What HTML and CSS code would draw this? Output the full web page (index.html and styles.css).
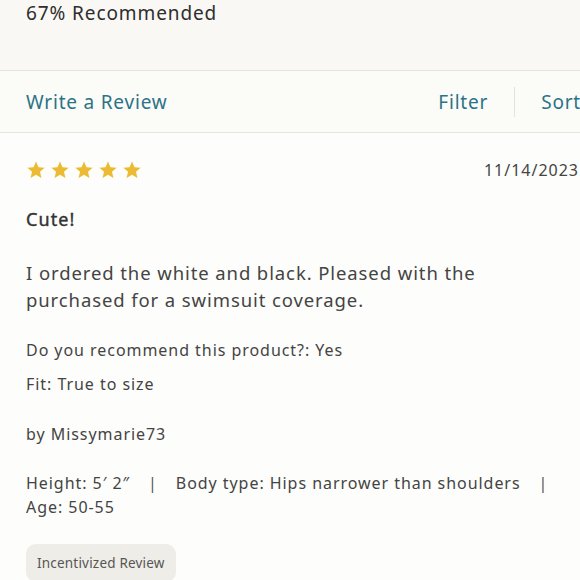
FILE: index.html
```html
<!DOCTYPE html>
<html lang="en">
<head>
<meta charset="utf-8">
<link rel="stylesheet" href="styles.css">
</head>
<body>
<div class="page">
  <section class="summary">
    <div class="summary-text">67% Recommended</div>
  </section>
  <nav class="toolbar">
    <a class="link">Write a Review</a>
    <div class="tools">
      <a class="link filter">Filter</a>
      <span class="divider"></span>
      <a class="link sort">Sort</a>
    </div>
  </nav>
  <article class="review">
    <div class="review-head">
      <div class="stars">
        <svg class="star" viewBox="0 0 24 24"><path d="M12 1.8l3 6.9 7.4.6-5.6 4.9 1.7 7.3L12 17.6l-6.5 3.9 1.7-7.3L1.6 9.3 9 8.7z"/></svg>
        <svg class="star" viewBox="0 0 24 24"><path d="M12 1.8l3 6.9 7.4.6-5.6 4.9 1.7 7.3L12 17.6l-6.5 3.9 1.7-7.3L1.6 9.3 9 8.7z"/></svg>
        <svg class="star" viewBox="0 0 24 24"><path d="M12 1.8l3 6.9 7.4.6-5.6 4.9 1.7 7.3L12 17.6l-6.5 3.9 1.7-7.3L1.6 9.3 9 8.7z"/></svg>
        <svg class="star" viewBox="0 0 24 24"><path d="M12 1.8l3 6.9 7.4.6-5.6 4.9 1.7 7.3L12 17.6l-6.5 3.9 1.7-7.3L1.6 9.3 9 8.7z"/></svg>
        <svg class="star" viewBox="0 0 24 24"><path d="M12 1.8l3 6.9 7.4.6-5.6 4.9 1.7 7.3L12 17.6l-6.5 3.9 1.7-7.3L1.6 9.3 9 8.7z"/></svg>
      </div>
      <div class="date">11/14/2023</div>
    </div>
    <h3 class="title">Cute!</h3>
    <p class="body">I ordered the white and black. Pleased with the purchased for a swimsuit coverage.</p>
    <p class="meta">Do you recommend this product?: Yes</p>
    <p class="meta fit">Fit: True to size</p>
    <p class="meta author">by Missymarie73</p>
    <div class="meta attrs">
      <span>Height: 5′ 2″</span>
      <span class="sep">|</span>
      <span>Body type: Hips narrower than shoulders</span>
      <span class="sep">|</span>
      <span>Age: 50-55</span>
    </div>
    <div class="badge">Incentivized Review</div>
  </article>
</div>
</body>
</html>
```
FILE: styles.css
```css
* { box-sizing: border-box; }
html, body { margin: 0; padding: 0; }
body {
  background: #fdfdfb;
  font-family: "Noto Sans", "Open Sans", sans-serif;
  color: #333;
  width: 580px;
  height: 580px;
  overflow: hidden;
}
.page { width: 580px; }
.summary {
  height: 71px;
  background: #f9f8f4;
  border-bottom: 1px solid #e6e4df;
  padding-left: 26px;
}
.summary-text {
  font-size: 19px;
  line-height: 26px;
  letter-spacing: 0.9px;
  color: #2e2e2e;
}
.toolbar {
  height: 62px;
  background: #fbfbf8;
  border-bottom: 1px solid #e8e6e1;
  display: flex;
  align-items: center;
  justify-content: space-between;
  padding-left: 26px;
  white-space: nowrap;
  overflow: hidden;
}
.link {
  color: #2b7387;
  font-size: 19px;
  letter-spacing: 0.8px;
}
.tools {
  display: flex;
  align-items: center;
  margin-right: -1px;
}
.divider {
  width: 1px;
  height: 30px;
  background: #e4e2dd;
  margin: 0 26px;
}
.review { padding: 0 0 0 26px; }
.review-head {
  display: flex;
  justify-content: space-between;
  align-items: center;
  height: 24px;
  margin-top: 25px;
}
.stars { display: flex; gap: 4px; }
.star { width: 20px; height: 20px; fill: #ecbb34; }
.date {
  font-size: 16px;
  letter-spacing: 1px;
  color: #444;
  margin-right: 1px;
}
.title {
  margin: 25px 0 0;
  font-size: 18px;
  font-weight: 400;
  -webkit-text-stroke: 0.4px #333;
  letter-spacing: 1.1px;
  line-height: 24px;
  color: #333;
}
.body {
  margin: 28px 0 0;
  font-size: 18.5px;
  line-height: 27px;
  letter-spacing: 0.9px;
  color: #444;
  padding-right: 50px;
}
.meta {
  margin: 0;
  font-size: 16px;
  line-height: 22px;
  letter-spacing: 0.95px;
  color: #444;
}
.body + .meta { margin-top: 26px; }
.fit { margin-top: 12px; }
.author { margin-top: 28px; }
.attrs {
  margin-top: 26px;
  margin-right: -20px;
  line-height: 24px;
  display: flex;
  flex-wrap: wrap;
}
.sep { padding: 0 18px; color: #555; }
.badge {
  display: inline-block;
  margin-top: 25px;
  background: #efede8;
  border-radius: 10px;
  padding: 10px 11px;
  font-size: 13.5px;
  letter-spacing: 0.2px;
  color: #555;
}
```
